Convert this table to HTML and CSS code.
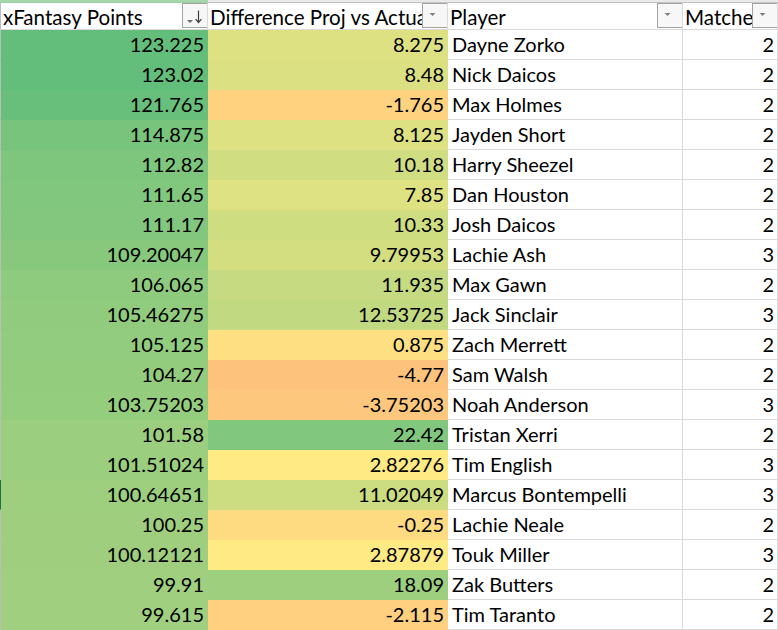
FILE: index.html
```html
<!DOCTYPE html>
<html>
<head>
<meta charset="utf-8">
<title>xFantasy Points</title>
<link rel="stylesheet" href="styles.css">
</head>
<body>
<div class="sheet">
  <div class="strip strip-a"></div><div class="strip"></div><div class="strip"></div><div class="strip"></div>

  <div class="hd col-a"><span class="htext">xFantasy Points</span>
    <span class="filter"><svg viewBox="0 0 24 25" width="24" height="25"><path d="M5 17h6l-3 3z" fill="#6b6b6b"/><path d="M16.5 7.5v11.5" stroke="#404040" stroke-width="1.2"/><path d="M13.6 16.2l2.9 3.3 2.9-3.3" fill="none" stroke="#404040" stroke-width="1.2"/></svg></span></div>
  <div class="hd"><span class="htext">Difference Proj vs Actual</span>
    <span class="filter"><svg viewBox="0 0 24 25" width="24" height="25"><path d="M7.5 10h6l-3 3z" fill="#808080"/></svg></span></div>
  <div class="hd"><span class="htext">Player</span>
    <span class="filter"><svg viewBox="0 0 24 25" width="24" height="25"><path d="M7.5 10h6l-3 3z" fill="#808080"/></svg></span></div>
  <div class="hd"><span class="htext">Matches</span>
    <span class="filter"><svg viewBox="0 0 24 25" width="24" height="25"><path d="M7.5 10h6l-3 3z" fill="#808080"/></svg></span></div>

  <div class="c col-a fill num" style="background:rgb(99,190,123)">123.225</div><div class="c fill num" style="background:rgb(221,225,130)">8.275</div><div class="c txt">Dayne Zorko</div><div class="c num">2</div>
  <div class="c col-a fill num" style="background:rgb(100,190,123)">123.02</div><div class="c fill num" style="background:rgb(219,225,130)">8.48</div><div class="c txt">Nick Daicos</div><div class="c num">2</div>
  <div class="c col-a fill num" style="background:rgb(103,191,123)">121.765</div><div class="c fill num" style="background:rgb(254,210,127)">-1.765</div><div class="c txt">Max Holmes</div><div class="c num">2</div>
  <div class="c col-a fill num" style="background:rgb(121,196,124)">114.875</div><div class="c fill num" style="background:rgb(222,225,130)">8.125</div><div class="c txt">Jayden Short</div><div class="c num">2</div>
  <div class="c col-a fill num" style="background:rgb(126,198,125)">112.82</div><div class="c fill num" style="background:rgb(208,222,129)">10.18</div><div class="c txt">Harry Sheezel</div><div class="c num">2</div>
  <div class="c col-a fill num" style="background:rgb(129,199,125)">111.65</div><div class="c fill num" style="background:rgb(223,226,130)">7.85</div><div class="c txt">Dan Houston</div><div class="c num">2</div>
  <div class="c col-a fill num" style="background:rgb(130,199,125)">111.17</div><div class="c fill num" style="background:rgb(207,221,129)">10.33</div><div class="c txt">Josh Daicos</div><div class="c num">2</div>
  <div class="c col-a fill num" style="background:rgb(135,200,125)">109.20047</div><div class="c fill num" style="background:rgb(211,222,129)">9.79953</div><div class="c txt">Lachie Ash</div><div class="c num">3</div>
  <div class="c col-a fill num" style="background:rgb(143,203,126)">106.065</div><div class="c fill num" style="background:rgb(197,218,129)">11.935</div><div class="c txt">Max Gawn</div><div class="c num">2</div>
  <div class="c col-a fill num" style="background:rgb(145,203,126)">105.46275</div><div class="c fill num" style="background:rgb(193,217,128)">12.53725</div><div class="c txt">Jack Sinclair</div><div class="c num">3</div>
  <div class="c col-a fill num" style="background:rgb(146,204,126)">105.125</div><div class="c fill num" style="background:rgb(254,224,130)">0.875</div><div class="c txt">Zach Merrett</div><div class="c num">2</div>
  <div class="c col-a fill num" style="background:rgb(148,204,126)">104.27</div><div class="c fill num" style="background:rgb(253,195,124)">-4.77</div><div class="c txt">Sam Walsh</div><div class="c num">2</div>
  <div class="c col-a fill num" style="background:rgb(149,205,126)">103.75203</div><div class="c fill num" style="background:rgb(253,200,125)">-3.75203</div><div class="c txt">Noah Anderson</div><div class="c num">3</div>
  <div class="c col-a fill num" style="background:rgb(155,206,126)">101.58</div><div class="c fill num" style="background:rgb(129,199,125)">22.42</div><div class="c txt">Tristan Xerri</div><div class="c num">2</div>
  <div class="c col-a fill num" style="background:rgb(155,206,126)">101.51024</div><div class="c fill num" style="background:rgb(255,234,132)">2.82276</div><div class="c txt">Tim English</div><div class="c num">3</div>
  <div class="c col-a fill num active-row" style="background:rgb(157,207,126)">100.64651</div><div class="c fill num" style="background:rgb(203,220,129)">11.02049</div><div class="c txt">Marcus Bontempelli</div><div class="c num">3</div>
  <div class="c col-a fill num" style="background:rgb(159,207,126)">100.25</div><div class="c fill num" style="background:rgb(254,218,129)">-0.25</div><div class="c txt">Lachie Neale</div><div class="c num">2</div>
  <div class="c col-a fill num" style="background:rgb(159,207,126)">100.12121</div><div class="c fill num" style="background:rgb(255,234,132)">2.87879</div><div class="c txt">Touk Miller</div><div class="c num">3</div>
  <div class="c col-a fill num" style="background:rgb(159,207,127)">99.91</div><div class="c fill num" style="background:rgb(157,207,126)">18.09</div><div class="c txt">Zak Butters</div><div class="c num">2</div>
  <div class="c col-a fill num" style="background:rgb(160,208,127)">99.615</div><div class="c fill num" style="background:rgb(254,208,127)">-2.115</div><div class="c txt">Tim Taranto</div><div class="c num">2</div>
</div>
</body>
</html>
```

FILE: styles.css
```css
html, body {
  margin: 0;
  padding: 0;
  background: #ffffff;
}

body {
  font-family: Lato, "Liberation Sans", sans-serif;
  font-size: 20px;
  color: #000000;
  width: 778px;
  height: 630px;
  overflow: hidden;
}

.sheet {
  display: grid;
  grid-template-columns: 208px 240px 235px 95px;
  grid-template-rows: 3px 27px;
  grid-auto-rows: 30px;
}

.strip {
  background: #e9e9e9;
  border-bottom: 1px solid #c4c4c4;
}

.strip-a {
  background: #a6d6ad;
  border-bottom-color: #9ccfa4;
}

.hd {
  position: relative;
  background: #ffffff;
  border-right: 1px solid #dadada;
  border-bottom: 1px solid #dadada;
  padding-left: 2px;
  font-size: 20.6px;
  line-height: 27px;
  white-space: nowrap;
  overflow: hidden;
}

.htext {
  display: block;
  padding-top: 1px;
}

.filter {
  position: absolute;
  top: 0;
  right: 0;
  width: 25px;
  height: 25px;
  box-sizing: border-box;
  background: #f7f7f7;
  border: 1px solid #a3a3a3;
  border-right: none;
  display: flex;
}

.filter svg {
  display: block;
  margin-left: -1px;
  margin-top: -1px;
}

.c {
  border-right: 1px solid #dadada;
  border-bottom: 1px solid #dadada;
  line-height: 29px;
  white-space: nowrap;
  overflow: hidden;
}

.col-a {
  border-left: 1px solid #bdbdbd;
}

.fill {
  border-right-color: transparent;
  border-bottom-color: transparent;
}

.active-row {
  border-left-color: #1e7145;
}

.num {
  text-align: right;
  padding-right: 3px;
}

.txt {
  padding-left: 4px;
}
```
